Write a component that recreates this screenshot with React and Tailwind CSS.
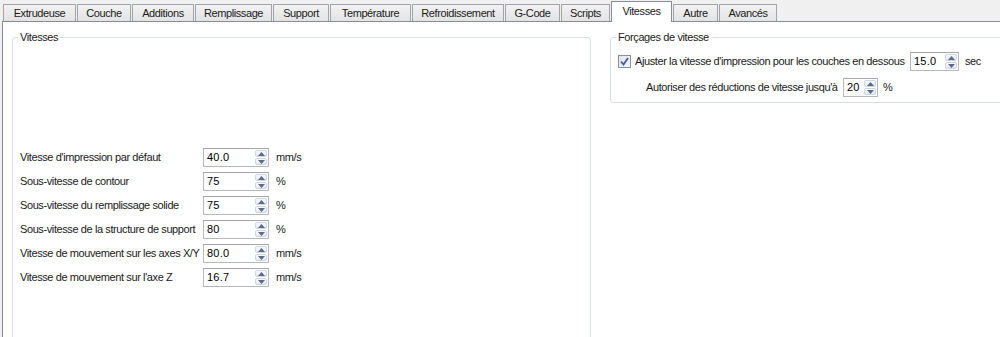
import React from "react";

const tabs = [
  ["Extrudeuse", "w-[73px]"],
  ["Couche", "w-[54px]"],
  ["Additions", "w-[62px]"],
  ["Remplissage", "w-[77px]"],
  ["Support", "w-[56px]"],
  ["Température", "w-[81px]"],
  ["Refroidissement", "w-[92px]"],
  ["G-Code", "w-[55px]"],
  ["Scripts", "w-[49px]"],
  ["Vitesses", "w-[61px]"],
  ["Autre", "w-[45px]"],
  ["Avancés", "w-[58px]"],
];

function Arrow({ up }) {
  return (
    <svg width="7" height="4" viewBox="0 0 7 4" className="block">
      {up ? (
        <path d="M0 4 L3.5 0 L7 4 Z" fill="#5a6a88" />
      ) : (
        <path d="M0 0 L3.5 4 L7 0 Z" fill="#5a6a88" />
      )}
    </svg>
  );
}

function Spin({ value, w }) {
  return (
    <div className={`flex h-[19px] shrink-0 border border-[#b5b8bf] border-t-[#a3a6ad] bg-white ${w}`}>
      <div className="flex-1 pl-[3px] leading-[17px] text-[11px] tracking-[0.2px] text-black">{value}</div>
      <div className="flex w-[13px] flex-col gap-[1px] py-[1px] pr-[1px]">
        <div className="flex flex-1 items-center justify-center rounded-[2px] border border-[#cdd5df] bg-gradient-to-b from-[#f8fafd] to-[#e3eaf3]">
          <Arrow up />
        </div>
        <div className="flex flex-1 items-center justify-center rounded-[2px] border border-[#cdd5df] bg-gradient-to-b from-[#f8fafd] to-[#e3eaf3]">
          <Arrow />
        </div>
      </div>
    </div>
  );
}

const rows = [
  ["Vitesse d'impression par défaut", "40.0", "mm/s"],
  ["Sous-vitesse de contour", "75", "%"],
  ["Sous-vitesse du remplissage solide", "75", "%"],
  ["Sous-vitesse de la structure de support", "80", "%"],
  ["Vitesse de mouvement sur les axes X/Y", "80.0", "mm/s"],
  ["Vitesse de mouvement sur l'axe Z", "16.7", "mm/s"],
];

export default function App() {
  return (
    <div
      className="flex h-[337px] w-[1000px] flex-col overflow-hidden whitespace-nowrap bg-[#f0f0f0] text-[11px] tracking-[-0.4px] text-[#1a1a1a]"
      style={{ fontFamily: '"Liberation Sans", Arial, sans-serif' }}
    >
      {/* tab bar */}
      <div className="flex h-[21px] shrink-0 items-end gap-[1px] pl-[3px]">
        {tabs.map(([t, w]) =>
          t === "Vitesses" ? (
            <div
              key={t}
              className={`relative z-10 -mb-px flex h-[21px] items-center justify-center border border-b-0 border-[#898c95] bg-white pb-[1px] ${w}`}
            >
              {t}
            </div>
          ) : (
            <div
              key={t}
              className={`flex h-[17px] items-center justify-center border border-b-0 border-[#a0a3aa] bg-gradient-to-b from-[#f2f2f2] to-[#e3e3e3] ${w}`}
            >
              {t}
            </div>
          )
        )}
      </div>

      {/* panel */}
      <div className="ml-[2px] flex flex-1 gap-[19px] border-l border-t border-[#898c95] bg-white pl-[9px] pt-[15px]">
        {/* Vitesses group */}
        <div className="relative h-[330px] w-[579px] shrink-0 rounded-[3px] border border-[#d5dfe5]">
          <span className="absolute -top-[8px] left-[5px] bg-white px-[2px] leading-[14px]">Vitesses</span>
          <div className="flex flex-col gap-[5px] pl-[7px] pt-[110px]">
            {rows.map(([l, v, u]) => (
              <div key={l} className="flex h-[19px] items-center">
                <div className="w-[183px] shrink-0">{l}</div>
                <Spin value={v} w="w-[66px]" />
                <div className="ml-[7px]">{u}</div>
              </div>
            ))}
          </div>
        </div>

        {/* Forçages group */}
        <div className="relative h-[66px] w-[420px] shrink-0 rounded-[3px] border border-[#d5dfe5]">
          <span className="absolute -top-[8px] left-[5px] bg-white px-[2px] leading-[14px]">Forçages de vitesse</span>
          <div className="flex flex-col gap-[7px] pl-[7px] pt-[14px]">
            <div className="flex h-[19px] items-center">
              <div className="flex h-[13px] w-[13px] shrink-0 items-center justify-center border border-[#8e8f8f] bg-gradient-to-br from-[#dfe6f3] to-[#f4f7fc]">
                <svg width="9" height="9" viewBox="0 0 9 9">
                  <path d="M1 4.5 L3.5 7.5 L8 1" stroke="#3f5d9a" strokeWidth="1.8" fill="none" />
                </svg>
              </div>
              <div className="ml-[4px] w-[275px] shrink-0">
                Ajuster la vitesse d'impression pour les couches en dessous
              </div>
              <Spin value="15.0" w="w-[49px]" />
              <div className="ml-[6px]">sec</div>
            </div>
            <div className="flex h-[19px] items-center pl-[28px]">
              <div className="w-[197px] shrink-0">Autoriser des réductions de vitesse jusqu'à</div>
              <Spin value="20" w="w-[35px]" />
              <div className="ml-[5px]">%</div>
            </div>
          </div>
        </div>
      </div>
    </div>
  );
}
